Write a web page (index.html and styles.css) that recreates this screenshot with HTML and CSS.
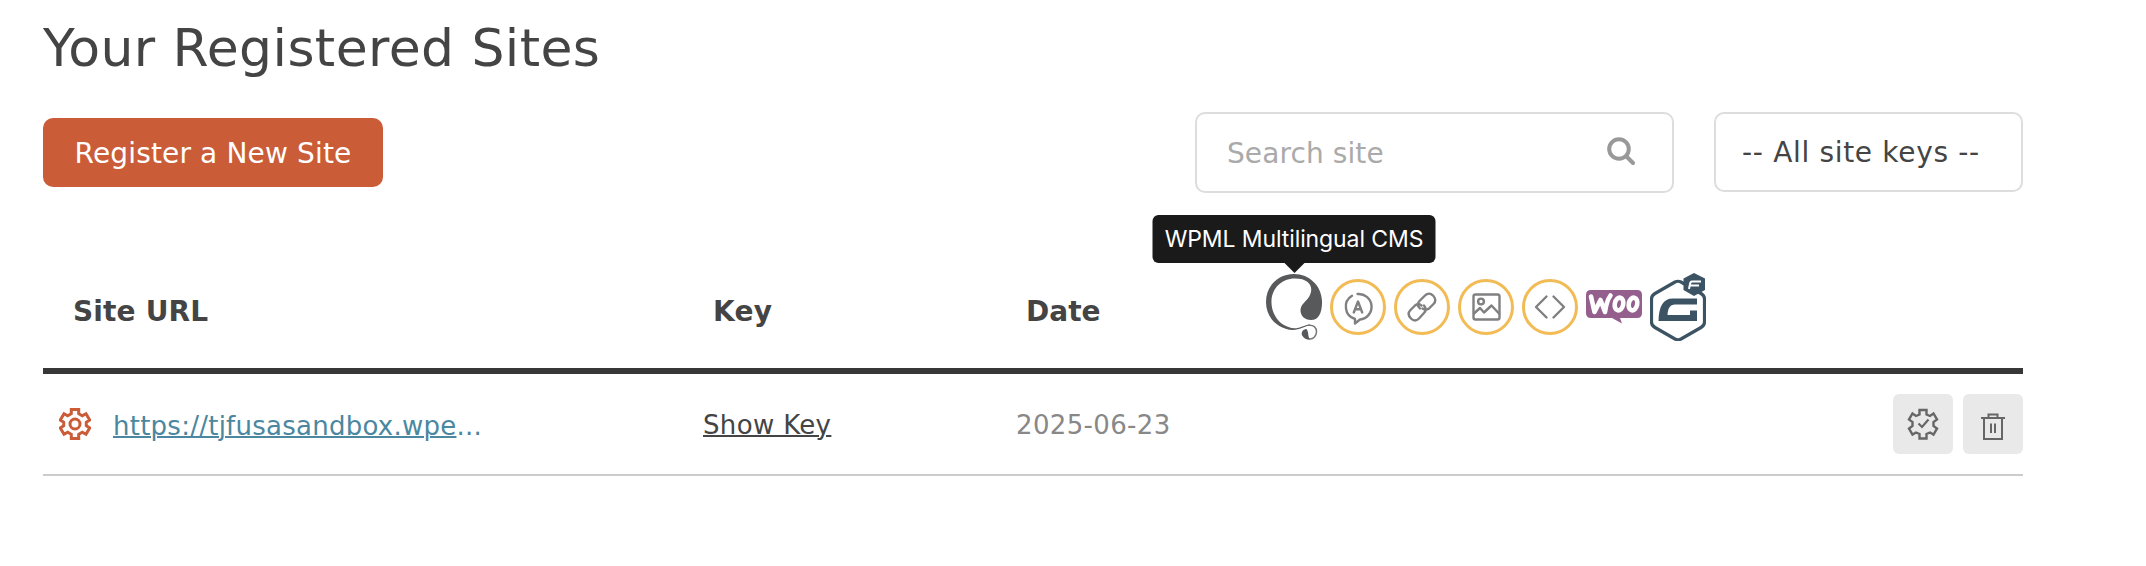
FILE: index.html
```html
<!DOCTYPE html>
<html lang="en">
<head>
  <meta charset="UTF-8" />
  <meta name="viewport" content="width=device-width, initial-scale=1.0" />
  <title>Your Registered Sites</title>
  <link rel="stylesheet" href="styles.css">
</head>
<body>
  <main class="sites">
    <h1>Your Registered Sites</h1>

    <div class="toolbar">
      <button class="register-btn" type="button">Register a New Site</button>
      <div class="filters">
        <div class="search">
          <input type="text" placeholder="Search site" aria-label="Search site" />
          <svg class="search-icon" viewBox="0 0 28 28" aria-hidden="true">
            <circle cx="12" cy="12" r="9.8" />
            <path d="M19.5 19.5L26 26" />
          </svg>
        </div>
        <div class="key-filter">-- All site keys --</div>
      </div>
    </div>

    <div class="table">
      <div class="row head-row">
        <div class="cell-url">Site URL</div>
        <div class="cell-key">Key</div>
        <div class="cell-date">Date</div>
        <div class="cell-plugins">
          <div class="plugin wpml">
            <div class="tooltip">WPML Multilingual CMS</div>
            <svg viewBox="0 0 56 66" aria-hidden="true">
              <!-- big swirl -->
              <path fill="#58595b" d="M28 0C43.500 0 55.500 12 56 27C56.300 38 53 46 45 46C38.500 46 34.500 41.500 34.500 36.500C34.500 30 40.500 27.500 43.500 22C48 13.500 44 4.500 29 4.500C15 4.500 5 15 5.500 29C6 42 15 53 28 54.300C34 54.500 38 51 44 50.500L44 51.500C38 52 34 56 27 56C11 55 0 43 0 28C0 12 12 0 28 0Z" />
              <!-- small swirl -->
              <path fill="none" stroke="#77787a" stroke-width="1.500" d="M42 51.300C48 50.500 50.700 54 50.500 58C50.300 62 47.500 65 44 65C40.500 65 38 63.500 37 60.500" />
              <path fill="#58595b" d="M40.500 55C36.500 55.500 34.500 58.500 36.500 62C38 64.500 41 65.500 44 65.500C41.500 62.500 43 58 40.500 55Z" />
            </svg>
          </div>
          <div class="plugin ring">
            <svg viewBox="0 0 56 56" aria-hidden="true">
              <path d="M22 16.800A12.800 12.800 0 0 0 25 40V44.500L30 40.500A12.800 12.800 0 0 0 27.500 15" />
              <path d="M23.800 33.500L28 22.500L32.200 33.500M25.300 30.300H30.700" />
            </svg>
          </div>
          <div class="plugin ring">
            <svg viewBox="0 0 56 56" aria-hidden="true">
              <path d="M24.500 30.500C21.500 27.500 22 25 24 23L29.500 17.500C32 15 35 15 37.500 17.500C40.500 20.500 40.500 23.500 38 26L33.500 30.500C31.500 32 29 32 27 30.500" transform="translate(1.500 -1)" />
              <path d="M31.500 25.500C34 28.500 33.500 31 31.500 33L26.500 38.500C24 41 21 41 18.500 38.500C15.500 35.500 15.500 32.500 18 30L22.500 25.500C24.500 24 27 24 29 25.500" transform="translate(-1.500 1)" />
            </svg>
          </div>
          <div class="plugin ring">
            <svg viewBox="0 0 56 56" aria-hidden="true">
              <rect x="15.500" y="15.500" width="26" height="25" rx="2" />
              <circle cx="23" cy="22.500" r="2.900" />
              <path d="M16 34.500L22 29L26 33.500L33.500 26.500L41 34.500" />
            </svg>
          </div>
          <div class="plugin ring">
            <svg viewBox="0 0 56 56" aria-hidden="true">
              <path d="M24.500 17.500L14 28L24.500 38.500M31.500 17.500L42 28L31.500 38.500" />
            </svg>
          </div>
          <div class="plugin woo">
            <svg viewBox="0 0 56 34" aria-hidden="true">
              <path fill="#945f8d" d="M5 0H51Q56 0 56 5V23Q56 28 51 28H34L36 33.500L26 28H5Q0 28 0 23V5Q0 0 5 0Z" />
              <g fill="none" stroke="#fff" stroke-width="4.600" stroke-linecap="round" stroke-linejoin="round">
                <path d="M5 6.500L8.500 22L14.500 10L19 22Q20.500 11 24.500 5.500" />
                <ellipse cx="33" cy="14" rx="4.200" ry="6.500" transform="rotate(12 33 14)" />
                <ellipse cx="47" cy="14" rx="4.200" ry="6.500" transform="rotate(12 47 14)" />
              </g>
            </svg>
          </div>
          <div class="plugin gravity">
            <svg viewBox="0 0 56 68" aria-hidden="true">
              <path d="M25 9Q28 7.500 31 9L51 20.500Q54.500 22.500 54.500 26V49Q54.500 52.500 51 54.500L31 66Q28 67.500 25 66L5 54.500Q1.500 52.500 1.500 49V26Q1.500 22.500 5 20.500Z" fill="#fff" stroke="#3c5364" stroke-width="3.200" />
              <path d="M47 25.500H23C13 25.500 9 33 8.500 48H47V37.500H40V42H17.500C18 35 20 31.500 25 31.500H47Z" fill="#3c5364" />
              <path d="M44 0L55 5.500V17L44 23L33.500 17V5.500Z" fill="#3c5364" />
              <path d="M51 8.500H42Q40.500 8.500 40 11L39 16M40 12.500H49" fill="none" stroke="#fff" stroke-width="2" />
            </svg>
          </div>
        </div>
      </div>

      <div class="row site-row">
        <div class="cell-url">
          <svg class="gear" viewBox="0 0 32 32" aria-hidden="true">
            <path d="M12.300 1.500H19.700V5.700L23.300 7.800L27 5.700L30.700 12L27.300 14.300V17.700L30.700 20L27 26.300L23.300 24.200L19.700 26.300V30.500H12.300V26.300L8.700 24.200L5 26.300L1.300 20L4.700 17.700V14.300L1.300 12L5 5.700L8.700 7.800L12.300 5.700Z" />
            <circle cx="16" cy="16" r="5" />
          </svg>
          <span class="site-link"><a href="#">https://tjfusasandbox.wpe</a>...</span>
        </div>
        <div class="cell-key"><a href="#">Show Key</a></div>
        <div class="cell-date">2025-06-23</div>
        <div class="actions">
          <button type="button" aria-label="Site settings">
            <svg viewBox="0 0 60 60" aria-hidden="true">
              <path stroke-width="2.400" d="M26.500 16H33.500V20.500L37 22L40.500 19.500L44 25.500L40.500 28V32L44 34.500L40.500 40.500L37 38.500L33.500 40V44.500H26.500V40L23 38.500L19.500 40.500L16 34.500L19.500 32V28L16 25.500L19.500 19.500L23 22L26.500 20.500Z" />
              <path stroke-width="2.200" d="M25.500 29.500L29 33L35.500 25.500" />
            </svg>
          </button>
          <button type="button" aria-label="Delete site">
            <svg viewBox="0 0 60 60" aria-hidden="true">
              <path stroke-width="2" d="M18 24H42M21 24V45H39V24M25.500 24V20.500H34.500V24M28 29.500V39M32 29.500V39" />
            </svg>
          </button>
        </div>
      </div>
    </div>
  </main>
</body>
</html>
```

FILE: styles.css
```css
* {
  box-sizing: border-box;
}

body {
  margin: 0;
  background: #fff;
  color: #444;
  font-family: Verdana, "DejaVu Sans", sans-serif;
  font-size: 28px;
}

.sites {
  width: 1980px;
  margin-left: 43px;
}

h1 {
  margin: 0;
  height: 112px;
  padding-top: 17px;
  font-size: 52px;
  font-weight: normal;
  letter-spacing: 0.4px;
  line-height: 62px;
  white-space: nowrap;
}

.toolbar {
  display: flex;
  justify-content: space-between;
  height: 81px;
}

button {
  border: none;
  font-family: inherit;
  cursor: pointer;
}

.register-btn {
  width: 340px;
  height: 69px;
  margin-top: 6px;
  padding: 1px 0 0;
  border-radius: 10px;
  background: #cb5c38;
  color: #fff;
  font-size: 28px;
  letter-spacing: 0.15px;
}

.filters {
  display: flex;
  gap: 40px;
}

.search {
  display: flex;
  align-items: center;
  width: 479px;
  height: 81px;
  padding: 0 37px 0 30px;
  border: 2px solid #ddd;
  border-radius: 10px;
}

.search input {
  flex: 1;
  min-width: 0;
  padding: 2px 0 0;
  border: none;
  outline: none;
  background: none;
  font: inherit;
  letter-spacing: 0.1px;
}

.search input::placeholder {
  color: #aaa;
}

.search-icon {
  width: 28px;
  height: 28px;
  margin-bottom: 3px;
  fill: none;
  stroke: #999;
  stroke-width: 4;
  stroke-linecap: round;
}

.key-filter {
  width: 309px;
  height: 80px;
  padding-left: 26px;
  border: 2px solid #ddd;
  border-radius: 10px;
  letter-spacing: 0.68px;
  line-height: 78px;
  white-space: nowrap;
}

.row {
  display: grid;
  grid-template-columns: 660px 314px 249px 1fr;
  align-items: center;
}

.head-row {
  height: 181px;
  padding-top: 61px;
  border-bottom: 6px solid #373737;
  font-weight: bold;
}

.head-row .cell-url {
  padding-left: 30px;
  letter-spacing: 0.15px;
}

.head-row .cell-key {
  padding-left: 10px;
  letter-spacing: 0.3px;
}

.head-row .cell-date {
  padding-left: 9px;
}

.cell-plugins {
  display: flex;
  align-items: center;
  gap: 8px;
  margin-top: -9px;
}

.plugin {
  position: relative;
  flex: none;
  width: 56px;
  font-weight: normal;
}

.plugin svg {
  display: block;
  width: 100%;
}

.ring {
  height: 56px;
  border: 3px solid #f2bb55;
  border-radius: 50%;
}

.ring svg {
  width: 56px;
  margin: -3px;
  fill: none;
  stroke: #808080;
  stroke-width: 2.4;
  stroke-linecap: round;
  stroke-linejoin: round;
}

.tooltip {
  position: absolute;
  bottom: 77px;
  left: 50%;
  width: 283px;
  height: 48px;
  border-radius: 6px;
  background: #1a1a1a;
  color: #fff;
  font-family: Inter, sans-serif;
  font-size: 23px;
  letter-spacing: -0.1px;
  line-height: 48px;
  text-align: center;
  white-space: nowrap;
  transform: translateX(-50%);
}

.tooltip::after {
  content: "";
  position: absolute;
  top: 100%;
  left: 50%;
  margin-left: -10px;
  border: 10px solid transparent;
  border-top-color: #1a1a1a;
  border-bottom: none;
}

.site-row {
  height: 102px;
  border-bottom: 2px solid #ccc;
  font-size: 26px;
}

.site-row .cell-url {
  display: flex;
  align-items: center;
  padding-left: 16px;
}

.gear {
  width: 32px;
  height: 32px;
  margin-right: 22px;
  fill: none;
  stroke: #cb5c38;
  stroke-width: 3;
}

.site-link {
  padding-top: 4px;
  letter-spacing: 0.25px;
}

.site-link,
.site-link a {
  color: #4b87a0;
}

.cell-key a {
  color: #444;
}

a {
  text-decoration-thickness: 2px;
}

.site-row .cell-key,
.site-row .cell-date {
  padding-top: 1px;
  letter-spacing: 0.35px;
}

.site-row .cell-date {
  color: #888;
  margin-left: -1px;
}

.actions {
  display: flex;
  justify-content: flex-end;
  gap: 10px;
}

.actions button {
  width: 60px;
  height: 60px;
  padding: 0;
  border-radius: 6px;
  background: #e9e9e9;
}

.actions svg {
  display: block;
  fill: none;
  stroke: #666;
}
```
